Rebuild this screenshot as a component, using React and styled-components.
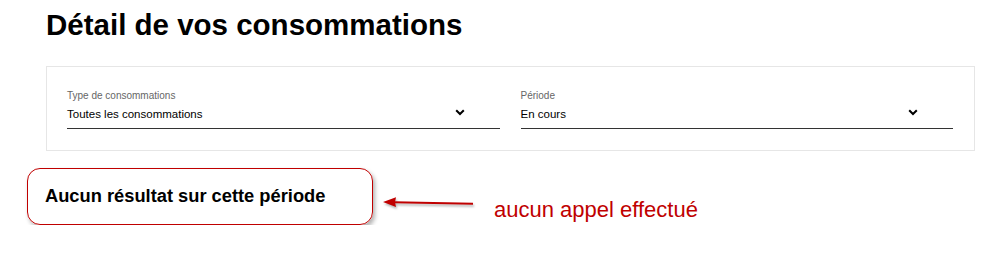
import styled, { createGlobalStyle } from "styled-components";

const GlobalStyle = createGlobalStyle`
  body {
    margin: 0;
    background: #fff;
    font-family: "Liberation Sans", Arial, Helvetica, sans-serif;
    color: #000;
  }
`;

const Chevron = () => (
  <svg width="10" height="7" viewBox="0 0 10 7">
    <path d="M1.2 1.2 L5 5 L8.8 1.2" fill="none" stroke="#000" strokeWidth="2" />
  </svg>
);

const Arrow = () => (
  <ArrowSvg width="92" height="14" viewBox="0 0 92 14">
    <line x1="11" y1="6.2" x2="90" y2="7.8" stroke="#c00000" strokeWidth="2" />
    <polygon points="0,6 13,1.2 12,6.2 13,11" fill="#c00000" />
  </ArrowSvg>
);

const Select = ({ label, value }) => (
  <Field>
    <Label>{label}</Label>
    <ValueRow>
      <Value>{value}</Value>
      <Chevron />
    </ValueRow>
  </Field>
);

const App = () => {
  return (
    <>
      <GlobalStyle />
      <Page>
        <Title>Détail de vos consommations</Title>
        <Card>
          <Select label="Type de consommations" value="Toutes les consommations" />
          <Select label="Période" value="En cours" />
        </Card>
        <Annotation>
          <Highlight>
            <Empty>Aucun résultat sur cette période</Empty>
          </Highlight>
          <Arrow />
          <Note>aucun appel effectué</Note>
        </Annotation>
      </Page>
    </>
  );
};

export default App;

const Page = styled.div`
  padding: 8px 0 0 46px;
  width: 929px;
`;

const Title = styled.h1`
  margin: 0;
  font-size: 29.5px;
  line-height: 33px;
  font-weight: 700;
`;

const Card = styled.div`
  margin-top: 25px;
  border: 1px solid #e6e6e6;
  padding: 23px 21px 21px 20px;
  display: grid;
  grid-template-columns: 1fr 1fr;
  column-gap: 21px;
`;

const Field = styled.div`
  display: flex;
  flex-direction: column;
`;

const Label = styled.div`
  font-size: 10px;
  line-height: 12px;
  color: #666;
`;

const ValueRow = styled.div`
  margin-top: 5px;
  display: flex;
  align-items: center;
  justify-content: space-between;
  padding: 0 35px 7px 0;
  border-bottom: 1.5px solid #333;

  svg {
    margin-top: -4px;
  }
`;

const Value = styled.div`
  font-size: 11.5px;
  line-height: 14px;
`;

const Annotation = styled.div`
  margin: 17px 0 0 -19px;
  display: flex;
  align-items: flex-start;
`;

const Highlight = styled.div`
  box-sizing: border-box;
  width: 346px;
  height: 57px;
  border: 1.5px solid #c00000;
  border-radius: 13px;
  box-shadow: 2px 3px 4px rgba(0, 0, 0, 0.3);
  display: flex;
  align-items: center;
  padding-left: 17px;
`;

const Empty = styled.div`
  font-size: 18.3px;
  font-weight: 700;
  line-height: 22px;
  margin-top: -2px;
`;

const ArrowSvg = styled.svg`
  margin: 28px 0 0 10px;
  filter: drop-shadow(1px 2px 1px rgba(0, 0, 0, 0.3));
`;

const Note = styled.div`
  margin: 29px 0 0 19px;
  font-size: 22px;
  line-height: 26px;
  color: #c00000;
`;
